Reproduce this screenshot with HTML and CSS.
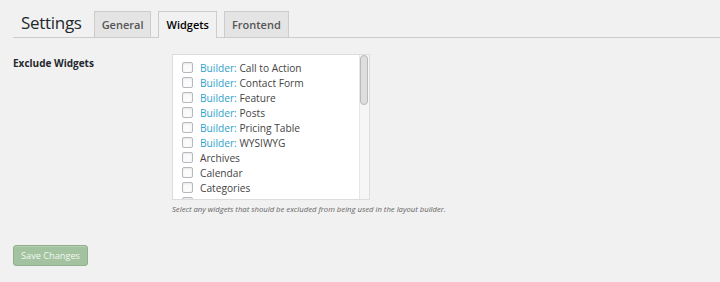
FILE: index.html
```html
<!DOCTYPE html>
<html lang="en">
<head>
<meta charset="utf-8">
<title>Settings</title>
<link rel="stylesheet" href="styles.css">
</head>
<body>
<div class="wrap">
  <div class="nav-wrapper">
    <h2 class="page-title">Settings</h2>
    <a class="nav-tab">General</a>
    <a class="nav-tab nav-tab-active">Widgets</a>
    <a class="nav-tab">Frontend</a>
  </div>

  <div class="form-row">
    <div class="row-label">Exclude Widgets</div>
    <div class="row-field">
      <div class="list-box">
        <div class="widget-list">
          <label class="item"><span class="check"></span><span class="prefix">Builder:</span>&nbsp;Call to Action</label>
          <label class="item"><span class="check"></span><span class="prefix">Builder:</span>&nbsp;Contact Form</label>
          <label class="item"><span class="check"></span><span class="prefix">Builder:</span>&nbsp;Feature</label>
          <label class="item"><span class="check"></span><span class="prefix">Builder:</span>&nbsp;Posts</label>
          <label class="item"><span class="check"></span><span class="prefix">Builder:</span>&nbsp;Pricing Table</label>
          <label class="item"><span class="check"></span><span class="prefix">Builder:</span>&nbsp;WYSIWYG</label>
          <label class="item"><span class="check"></span>Archives</label>
          <label class="item"><span class="check"></span>Calendar</label>
          <label class="item"><span class="check"></span>Categories</label>
          <div class="item"><span class="check"></span></div>
        </div>
        <div class="scrollbar"><div class="thumb"></div></div>
      </div>
      <p class="description">Select any widgets that should be excluded from being used in the layout builder.</p>
    </div>
  </div>

  <div class="submit">
    <button class="button-primary" type="button">Save Changes</button>
  </div>
</div>
</body>
</html>
```

FILE: styles.css
```css
html, body {
  margin: 0;
  padding: 0;
  background: #f1f1f1;
}

body {
  font-family: "Open Sans", "Noto Sans", "Liberation Sans", sans-serif;
  color: #444;
  width: 720px;
  height: 282px;
  overflow: hidden;
}

.wrap {
  padding: 0 0 0 13px;
}

.nav-wrapper {
  display: flex;
  align-items: flex-end;
  border-bottom: 1px solid #cccccc;
  padding-top: 8px;
}

.page-title {
  margin: 0 5px 0 0;
  padding: 0 0 0 8px;
  font-size: 17px;
  letter-spacing: -0.3px;
  font-weight: 400;
  line-height: 29px;
  color: #23282d;
}

.nav-tab {
  display: block;
  margin-left: 7px;
  padding: 0 7px;
  height: 25px;
  line-height: 25px;
  border: 1px solid #cccccc;
  border-bottom: none;
  background: #e4e4e4;
  color: #555555;
  font-size: 11px;
  font-weight: 600;
  text-decoration: none;
}

.nav-tab-active {
  background: #f1f1f1;
  color: #000000;
  margin-bottom: -1px;
  padding-bottom: 1px;
}

.form-row {
  display: flex;
  margin-top: 16px;
}

.row-label {
  width: 159px;
  flex: none;
  padding-top: 2px;
  font-size: 10px;
  line-height: 15px;
  font-weight: 700;
  color: #23282d;
}

.row-field {
  display: flex;
  flex-direction: column;
}

.list-box {
  display: flex;
  width: 196px;
  height: 144px;
  border: 1px solid #dddddd;
  background: #ffffff;
  overflow: hidden;
}

.widget-list {
  flex: 1;
  padding: 5px 0 0 9px;
  overflow: hidden;
}

.scrollbar {
  flex: none;
  width: 10px;
  background: #f6f6f6;
  border-left: 1px solid #e6e6e6;
  box-sizing: border-box;
  padding: 0 1px 0 0;
}

.thumb {
  height: 48px;
  background: #dedede;
  border: 1px solid #b9b9b9;
  border-radius: 4px;
}

.item {
  display: flex;
  align-items: center;
  height: 15px;
  font-size: 10.2px;
  color: #444444;
  white-space: nowrap;
}

.check {
  display: block;
  flex: none;
  width: 9px;
  height: 9px;
  border: 1px solid #b4b9be;
  border-radius: 2px;
  background: #fbfbfb;
  margin-right: 7px;
  box-shadow: inset 0 1px 2px rgba(0, 0, 0, 0.08);
}

.prefix {
  color: #2ea2cc;
}

.description {
  margin: 4px 0 0 0;
  font-size: 7.7px;
  font-style: italic;
  line-height: 11px;
  color: #666666;
}

.submit {
  margin-top: 30px;
}

.button-primary {
  display: block;
  height: 21px;
  padding: 0 7px;
  border: 1px solid #8fb08c;
  border-radius: 3px;
  background: #a3c3a0;
  color: #f2f7f1;
  font-family: "Open Sans", "Noto Sans", "Liberation Sans", sans-serif;
  font-size: 9.2px;
  line-height: 19px;
  box-shadow: inset 0 1px 0 rgba(255, 255, 255, 0.2);
}
```
